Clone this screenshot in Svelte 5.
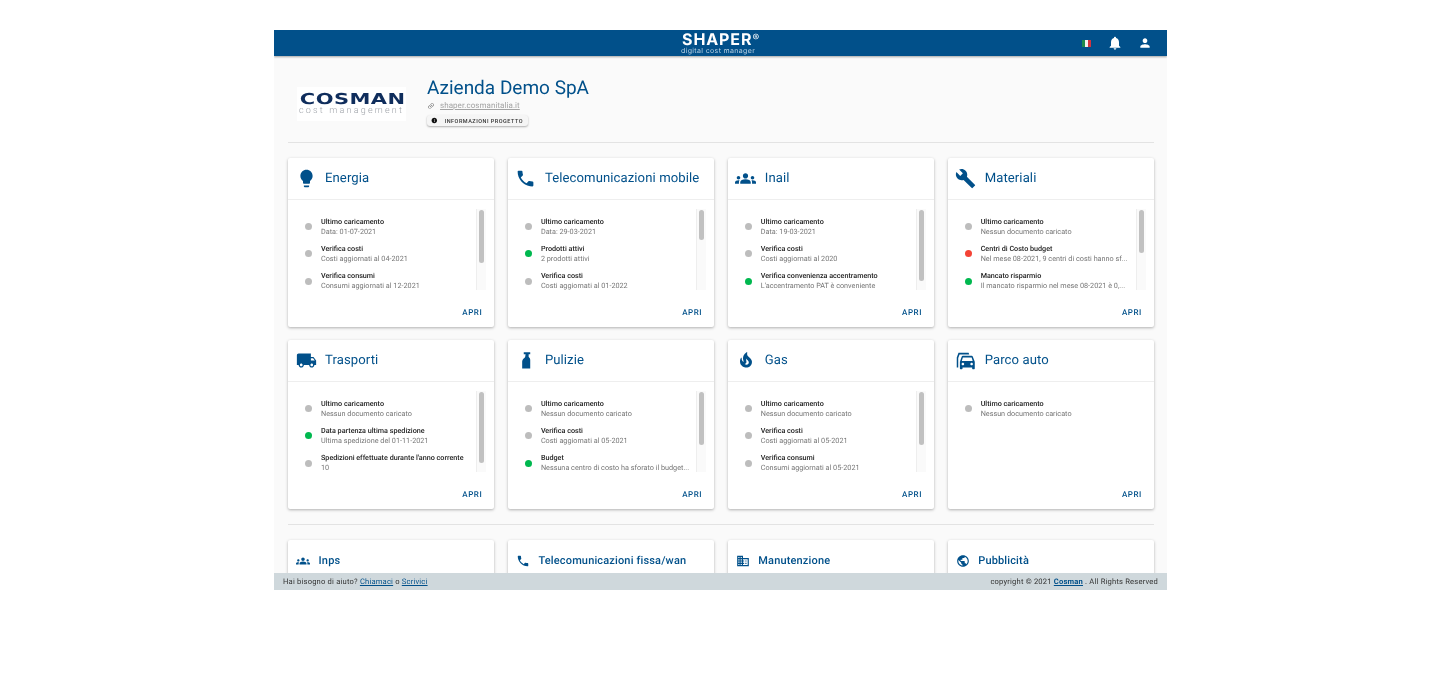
<script>
const icons = {
  bulb: "M9 21c0 .55.45 1 1 1h4c.55 0 1-.45 1-1v-1H9v1zm3-19C8.14 2 5 5.14 5 9c0 2.38 1.19 4.47 3 5.74V17c0 .55.45 1 1 1h6c.55 0 1-.45 1-1v-2.26c1.81-1.27 3-3.36 3-5.74 0-3.86-3.14-7-7-7z",
  phone: "M6.62 10.79c1.44 2.83 3.76 5.14 6.59 6.59l2.2-2.2c.27-.27.67-.36 1.02-.24 1.12.37 2.33.57 3.57.57.55 0 1 .45 1 1V20c0 .55-.45 1-1 1-9.39 0-17-7.61-17-17 0-.55.45-1 1-1h3.5c.55 0 1 .45 1 1 0 1.25.2 2.45.57 3.57.11.35.03.74-.25 1.02l-2.2 2.2z",
  groups: "M12 12.75c1.63 0 3.07.39 4.24.9 1.08.48 1.76 1.56 1.76 2.73V18H6v-1.61c0-1.18.68-2.26 1.76-2.73 1.17-.52 2.61-.91 4.24-.91zM4 13c1.1 0 2-.9 2-2s-.9-2-2-2-2 .9-2 2 .9 2 2 2zm1.13 1.1c-.37-.06-.74-.1-1.13-.1-.99 0-1.93.21-2.78.58C.48 14.9 0 15.62 0 16.43V18h4.5v-1.61c0-.83.23-1.61.63-2.29zM20 13c1.1 0 2-.9 2-2s-.9-2-2-2-2 .9-2 2 .9 2 2 2zm4 3.43c0-.81-.48-1.53-1.22-1.85-.85-.37-1.79-.58-2.78-.58-.39 0-.76.04-1.13.1.4.68.63 1.46.63 2.29V18H24v-1.57zM12 6c1.66 0 3 1.34 3 3s-1.34 3-3 3-3-1.34-3-3 1.34-3 3-3z",
  wrench: "M22.7 19l-9.1-9.1c.9-2.3.4-5-1.5-6.9-2-2-5-2.4-7.4-1.3L9 6 6 9 1.6 4.7C.4 7.1.9 10.1 2.9 12.1c1.9 1.9 4.6 2.4 6.9 1.5l9.1 9.1c.4.4 1 .4 1.4 0l2.3-2.3c.5-.4.5-1.1.1-1.4z",
  truck: "M20 8h-3V4H3c-1.1 0-2 .9-2 2v11h2c0 1.66 1.34 3 3 3s3-1.34 3-3h6c0 1.66 1.34 3 3 3s3-1.34 3-3h2v-5l-3-4zM6 18.5c-.83 0-1.5-.67-1.5-1.5s.67-1.5 1.5-1.5 1.5.67 1.5 1.5-.67 1.5-1.5 1.5zm13.5-9l1.96 2.5H17V9.5h2.5zm-1.5 9c-.83 0-1.5-.67-1.5-1.5s.67-1.5 1.5-1.5 1.5.67 1.5 1.5-.67 1.5-1.5 1.5z",
  spray: "M10 2.500h7.400v2.400H15.600V8c0 0 1.800 1 1.800 3v10H8.200V13c0-2.400 2.600-3.600 3.400-5l.5-3.100h-2.100z",
  fire: "M19.48 12.35c-1.57-4.08-7.16-4.3-5.81-10.23.1-.44-.37-.78-.75-.55C9.29 3.71 6.68 8 8.87 13.62c.18.46-.36.89-.75.59-1.81-1.37-2-3.34-1.84-4.75.06-.52-.62-.77-.91-.34C4.69 10.16 4 11.84 4 14.37c.38 5.6 5.11 7.32 6.81 7.54 2.43.31 5.06-.14 6.95-1.87 2.08-1.93 2.84-5.01 1.72-7.69zm-9.28 5.03c1.44-.35 2.18-1.39 2.38-2.31.33-1.43-.96-2.83-.09-5.09.33 1.87 3.27 3.04 3.27 5.08.08 2.53-2.66 4.7-5.56 2.32z",
  cars: "M2 20V8.500L4 3h11.500l.8 2H5.200L3.700 9v11zM20.400 7.600c-.2-.6-.7-1-1.400-1H9c-.6 0-1.200.4-1.400 1L5.600 13.500V21c0 .5.4 1 1 1h1c.5 0 1-.5 1-1v-1h11v1c0 .5.5 1 1 1h1c.6 0 1-.5 1-1v-7.500zM9 17.500c-.8 0-1.500-.7-1.500-1.500s.7-1.500 1.500-1.500 1.500.7 1.500 1.500-.7 1.500-1.500 1.500zm10 0c-.8 0-1.500-.7-1.500-1.500s.7-1.500 1.500-1.500 1.500.7 1.500 1.500-.7 1.500-1.500 1.500zM7.800 12.500L9 8.500h10l1.200 4z",
  domain: "M12 7V3H2v18h20V7H12zM6 19H4v-2h2v2zm0-4H4v-2h2v2zm0-4H4V9h2v2zm0-4H4V5h2v2zm4 12H8v-2h2v2zm0-4H8v-2h2v2zm0-4H8V9h2v2zm0-4H8V5h2v2zm10 12h-8v-2h2v-2h-2v-2h2v-2h-2V9h8v10zm-2-8h-2v2h2v-2zm0 4h-2v2h2v-2z",
  globe: "M12 2C6.48 2 2 6.48 2 12s4.48 10 10 10 10-4.48 10-10S17.52 2 12 2zm-1 17.93c-3.95-.49-7-3.85-7-7.93 0-.62.08-1.21.21-1.79L9 15v1c0 1.1.9 2 2 2v1.93zm6.9-2.54c-.26-.81-1-1.39-1.9-1.39h-1v-3c0-.55-.45-1-1-1H8v-2h2c.55 0 1-.45 1-1V7h2c1.1 0 2-.9 2-2v-.41c2.93 1.19 5 4.06 5 7.41 0 2.08-.8 3.97-2.1 5.39z",
  bell: "M12 22c1.1 0 2-.9 2-2h-4c0 1.1.89 2 2 2zm6-6v-5c0-3.07-1.64-5.64-4.5-6.32V4c0-.83-.67-1.5-1.5-1.5s-1.5.67-1.5 1.5v.68C7.63 5.36 6 7.92 6 11v5l-2 2v1h16v-1l-2-2z",
  person: "M12 12c2.21 0 4-1.79 4-4s-1.79-4-4-4-4 1.79-4 4 1.79 4 4 4zm0 2c-2.67 0-8 1.34-8 4v2h16v-2c0-2.66-5.33-4-8-4z",
  link: "M3.9 12c0-1.71 1.39-3.1 3.1-3.1h4V7H7c-2.76 0-5 2.24-5 5s2.24 5 5 5h4v-1.9H7c-1.71 0-3.1-1.39-3.1-3.1zM8 13h8v-2H8v2zm9-6h-4v1.9h4c1.71 0 3.1 1.39 3.1 3.1s-1.39 3.1-3.1 3.1h-4V17h4c2.76 0 5-2.24 5-5s-2.24-5-5-5z",
  info: "M12 2C6.48 2 2 6.48 2 12s4.48 10 10 10 10-4.48 10-10S17.52 2 12 2zm1 15h-2v-6h2v6zm0-8h-2V7h2v2z"
};

const cards = [
  { title: "Energia", icon: "bulb", thumb: 53, rows: [
    ["grey", "Ultimo caricamento", "Data: 01-07-2021"],
    ["grey", "Verifica costi", "Costi aggiornati al 04-2021"],
    ["grey", "Verifica consumi", "Consumi aggiornati al 12-2021"] ] },
  { title: "Telecomunicazioni mobile", icon: "phone", thumb: 30, rows: [
    ["grey", "Ultimo caricamento", "Data: 29-03-2021"],
    ["green", "Prodotti attivi", "2 prodotti attivi"],
    ["grey", "Verifica costi", "Costi aggiornati al 01-2022"] ] },
  { title: "Inail", icon: "groups", thumb: 71, rows: [
    ["grey", "Ultimo caricamento", "Data: 19-03-2021"],
    ["grey", "Verifica costi", "Costi aggiornati al 2020"],
    ["green", "Verifica convenienza accentramento", "L'accentramento PAT è conveniente"] ] },
  { title: "Materiali", icon: "wrench", thumb: 43, rows: [
    ["grey", "Ultimo caricamento", "Nessun documento caricato"],
    ["red", "Centri di Costo budget", "Nel mese 08-2021, 9 centri di costi hanno sf..."],
    ["green", "Mancato risparmio", "Il mancato risparmio nel mese 08-2021 è 0,..."] ] },
  { title: "Trasporti", icon: "truck", thumb: 71, rows: [
    ["grey", "Ultimo caricamento", "Nessun documento caricato"],
    ["green", "Data partenza ultima spedizione", "Ultima spedizione del 01-11-2021"],
    ["grey", "Spedizioni effettuate durante l'anno corrente", "10"] ] },
  { title: "Pulizie", icon: "spray", thumb: 53, rows: [
    ["grey", "Ultimo caricamento", "Nessun documento caricato"],
    ["grey", "Verifica costi", "Costi aggiornati al 05-2021"],
    ["green", "Budget", "Nessuna centro di costo ha sforato il budget..."] ] },
  { title: "Gas", icon: "fire", thumb: 53, rows: [
    ["grey", "Ultimo caricamento", "Nessun documento caricato"],
    ["grey", "Verifica costi", "Costi aggiornati al 05-2021"],
    ["grey", "Verifica consumi", "Consumi aggiornati al 05-2021"] ] },
  { title: "Parco auto", icon: "cars", thumb: 0, rows: [
    ["grey", "Ultimo caricamento", "Nessun documento caricato"] ] }
];

const small = [
  { title: "Inps", icon: "groups" },
  { title: "Telecomunicazioni fissa/wan", icon: "phone" },
  { title: "Manutenzione", icon: "domain" },
  { title: "Pubblicità", icon: "globe" }
];
</script>

<div class="frame">
  <header class="toolbar">
    <div class="brand">
      <div class="shaper">SHAPER<sup>®</sup></div>
      <div class="tag">digital cost manager</div>
    </div>
    <div class="actions">
      <span class="flag"><i class="g"></i><i class="w"></i><i class="r"></i></span>
      <svg class="bell" viewBox="0 0 24 24"><path d={icons.bell} /></svg>
      <svg class="person" viewBox="0 0 24 24"><path d={icons.person} /></svg>
    </div>
  </header>

  <main class="content">
    <section class="company">
      <div class="logo">
        <div class="cosman">COSMAN</div>
        <div class="costm">cost management</div>
      </div>
      <div class="info">
        <h1>Azienda Demo SpA</h1>
        <div class="site">
          <svg viewBox="0 0 24 24"><path d={icons.link} /></svg>
          <a href="#top">shaper.cosmanitalia.it</a>
        </div>
        <button class="project">
          <svg viewBox="0 0 24 24"><path d={icons.info} /></svg>
          INFORMAZIONI PROGETTO
        </button>
      </div>
    </section>

    <hr class="first" />

    <section class="grid">
      {#each cards as card}
        <article class="card">
          <div class="head">
            <span class="ico {card.icon}"><svg viewBox="0 0 24 24"><path d={icons[card.icon]} /></svg></span>
            <h2>{card.title}</h2>
          </div>
          <div class="body">
            <ul>
              {#each card.rows as row}
                <li>
                  <span class="dot {row[0]}"></span>
                  <div class="txt">
                    <div class="t">{row[1]}</div>
                    <div class="s">{row[2]}</div>
                  </div>
                </li>
              {/each}
            </ul>
            {#if card.thumb}
              <div class="track"><div class="thumb" style="height:{card.thumb}px"></div></div>
            {/if}
          </div>
          <div class="foot"><a href="#top">APRI</a></div>
        </article>
      {/each}
    </section>

    <hr class="second" />

    <section class="grid lower">
      {#each small as card}
        <article class="card mini">
          <span class="ico"><svg viewBox="0 0 24 24"><path d={icons[card.icon]} /></svg></span>
          <h3>{card.title}</h3>
        </article>
      {/each}
    </section>
  </main>

  <footer class="bottom">
    <div>Hai bisogno di aiuto? <a href="#top">Chiamaci</a> o <a href="#top">Scrivici</a></div>
    <div>copyright © 2021 <a class="strong" href="#top">Cosman</a> . All Rights Reserved</div>
  </footer>
</div>

<style>
  :global(body) {
    background: #fff;
    font-family: Roboto, "Liberation Sans", sans-serif;
  }
  .frame {
    width: 893px;
    height: 560px;
    margin: 30px 0 0 274px;
    display: flex;
    flex-direction: column;
    background: #fafafa;
    overflow: hidden;
    text-rendering: geometricPrecision;
    will-change: transform;
  }
  .toolbar {
    flex: none;
    height: 26px;
    background: #01508a;
    box-shadow: 0 1px 2px rgba(0, 0, 0, 0.35);
    display: flex;
    align-items: center;
    justify-content: flex-end;
    position: relative;
    z-index: 2;
  }
  .brand {
    position: absolute;
    left: 408px;
    top: 1px;
    color: #fff;
    font-family: Inter, "Liberation Sans", sans-serif;
  }
  .shaper {
    font-size: 16px;
    line-height: 16px;
    font-weight: 700;
    letter-spacing: 0.9px;
    white-space: nowrap;
  }
  .shaper sup {
    font-size: 10px;
    line-height: 0;
    vertical-align: 4px;
    font-weight: 400;
  }
  .tag {
    font-size: 7px;
    line-height: 6px;
    margin: 1px 0 0 -1px;
    letter-spacing: 0.35px;
    color: #bcd3e4;
    white-space: nowrap;
  }
  .actions {
    display: flex;
    align-items: center;
  }
  .flag {
    display: flex;
    width: 9px;
    height: 7px;
    margin-right: 16px;
  }
  .flag i { flex: 1; }
  .flag .g { background: #1f8a4c; }
  .flag .w { background: #f2f2f2; }
  .flag .r { background: #d2343f; }
  .actions svg {
    fill: #fff;
    display: block;
  }
  .bell { width: 16px; height: 16px; margin-right: 15px; }
  .person { width: 14px; height: 14px; margin-right: 15px; }

  .content {
    flex: 1;
    min-height: 0;
    overflow: hidden;
    padding: 0 13px 0 14px;
  }
  .company {
    display: flex;
    height: 86px;
    box-sizing: border-box;
    padding: 20px 0 0 9px;
  }
  .logo {
    width: 109px;
    height: 34px;
    margin-top: 11px;
    background: #fff;
    overflow: hidden;
  }
  .cosman {
    font-family: "DejaVu Sans", sans-serif;
    font-weight: 700;
    font-size: 15px;
    line-height: 14px;
    color: #0f2d5c;
    margin-top: 5px;
    padding-left: 2px;
    letter-spacing: 0.3px;
    transform: scaleX(1.4);
    transform-origin: left center;
    white-space: nowrap;
  }
  .costm {
    font-size: 9px;
    font-weight: 300;
    line-height: 7px;
    margin-top: 2px;
    color: #a0a4aa;
    padding-left: 2px;
    letter-spacing: 2.2px;
    white-space: nowrap;
  }
  .info { margin-left: 21px; }
  h1 {
    margin: 0;
    font-size: 19px;
    line-height: 24px;
    font-weight: 400;
    color: #01508a;
  }
  .site {
    display: flex;
    align-items: center;
    height: 11px;
    font-size: 8px;
    color: #a3a3a3;
    letter-spacing: 0.06px;
  }
  .site svg {
    width: 8px;
    height: 8px;
    fill: #777;
    transform: rotate(-45deg);
    margin-right: 5px;
  }
  .site a { color: #a3a3a3; text-decoration: underline; }
  .project {
    display: flex;
    align-items: center;
    margin-top: 4px;
    padding: 0 5px 0 4px;
    height: 11px;
    width: 101px;
    border: 0;
    border-radius: 3px;
    background: #f5f5f5;
    box-shadow: 0 1px 2px rgba(0, 0, 0, 0.3);
    font-family: Roboto, sans-serif;
    font-size: 5.5px;
    font-weight: 500;
    letter-spacing: 0.5px;
    color: #333;
    white-space: nowrap;
  }
  .project svg {
    width: 7px;
    height: 7px;
    fill: #111;
    margin-right: 7px;
  }
  hr {
    margin: 0;
    border: 0;
    border-top: 1px solid #e3e3e3;
  }
  .grid {
    display: grid;
    grid-template-columns: repeat(4, 1fr);
    column-gap: 13.5px;
    row-gap: 13px;
  }
  hr.first { margin-bottom: 15px; }
  hr.second { margin: 15px 0; }

  .card {
    background: #fff;
    border-radius: 2px;
    box-shadow: 0 1px 3px rgba(0, 0, 0, 0.3);
    height: 169px;
    display: flex;
    flex-direction: column;
  }
  .head {
    flex: none;
    height: 42px;
    box-sizing: border-box;
    padding-bottom: 1px;
    display: flex;
    align-items: center;
    border-bottom: 1px solid #eee;
  }
  .ico {
    flex: none;
    width: 37px;
    display: flex;
    justify-content: center;
    padding-right: 1px;
    box-sizing: border-box;
  }
  .ico svg {
    width: 21px;
    height: 21px;
    fill: #01508a;
    display: block;
  }
  .ico.fire svg { width: 18px; height: 18px; }
  h2 {
    margin: 0;
    font-size: 13.1px;
    font-weight: 400;
    letter-spacing: 0.1px;
    color: #01508a;
    white-space: nowrap;
  }
  .body {
    flex: none;
    height: 81px;
    margin-top: 9px;
    display: flex;
    position: relative;
    overflow: hidden;
  }
  ul {
    margin: 0;
    padding: 4px 0 0 17px;
    list-style: none;
    width: 163px;
    box-sizing: content-box;
  }
  li {
    display: flex;
    align-items: center;
    height: 27.33px;
  }
  .dot {
    flex: none;
    width: 7px;
    height: 7px;
    border-radius: 50%;
    margin-right: 9px;
  }
  .grey { background: #bdbdbd; }
  .green { background: #00b84f; }
  .red { background: #f44336; }
  .txt {
    min-width: 0;
    flex: 1;
    line-height: 10px;
  }
  .t {
    font-size: 7.2px;
    color: #212121;
    font-weight: 500;
    white-space: nowrap;
  }
  .s {
    font-size: 7.25px;
    color: #757575;
    white-space: nowrap;
  }
  .track {
    position: absolute;
    left: 188px;
    top: 0;
    width: 10px;
    height: 81px;
    box-sizing: border-box;
    background: #fafafa;
    border-left: 1px solid #eee;
    padding: 1px 0 0 2px;
  }
  .thumb {
    width: 5px;
    border-radius: 3px;
    background: #c1c1c1;
  }
  .foot {
    margin-top: auto;
    height: 30px;
    display: flex;
    align-items: center;
    justify-content: flex-end;
    padding-right: 12px;
  }
  .foot a {
    font-size: 8px;
    font-weight: 500;
    letter-spacing: 0.6px;
    color: #01508a;
    text-decoration: none;
  }
  .mini {
    height: 41px;
    flex-direction: row;
    align-items: center;
  }
  .mini .ico { width: 30.6px; padding-left: 0; padding-right: 0; }
  .mini .ico svg { width: 14px; height: 14px; }
  h3 {
    margin: 0;
    font-size: 11px;
    font-weight: 500;
    letter-spacing: 0.15px;
    color: #01508a;
    white-space: nowrap;
  }
  .bottom {
    flex: none;
    height: 17px;
    background: #cfd8dc;
    display: flex;
    align-items: center;
    justify-content: space-between;
    padding: 0 9px;
    font-size: 7.6px;
    letter-spacing: 0.19px;
    color: #333;
    position: relative;
    z-index: 2;
  }
  .bottom a { color: #01508a; text-decoration: underline; }
  .bottom a.strong { font-weight: 700; }
</style>
